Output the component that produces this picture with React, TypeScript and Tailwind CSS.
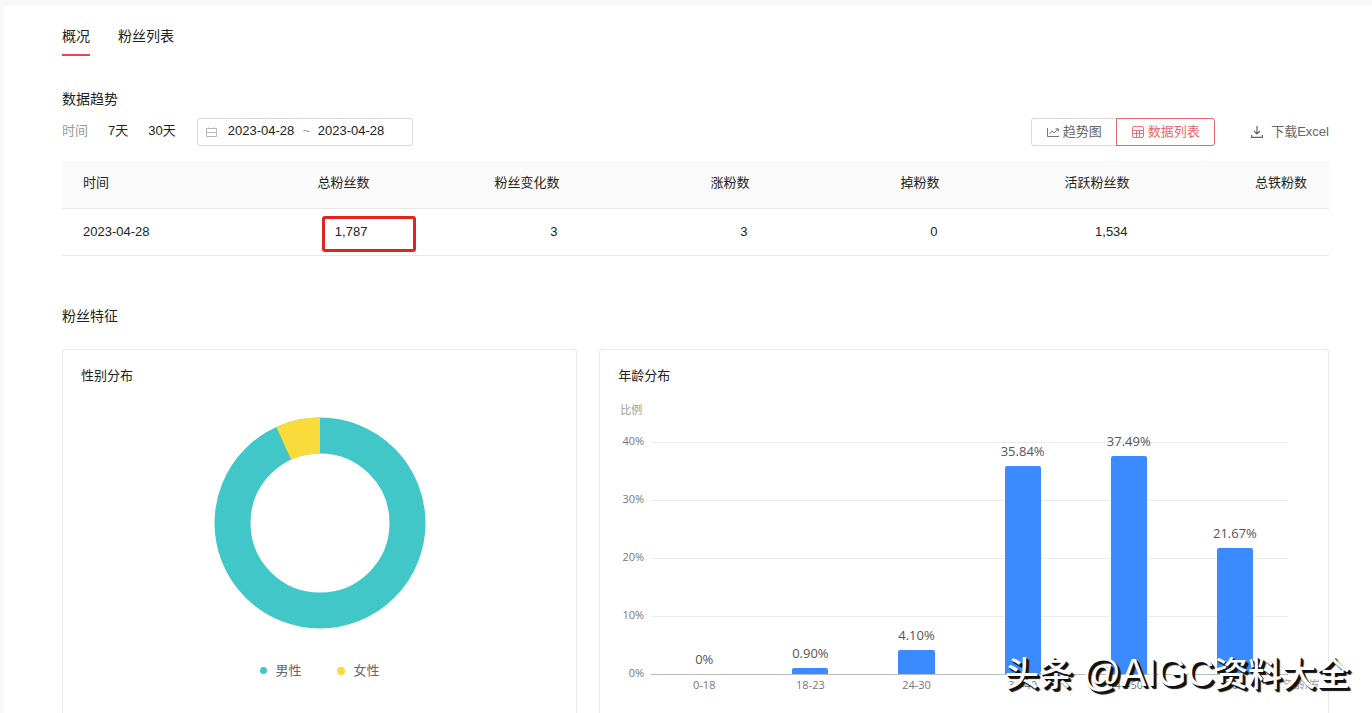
import React, { useState } from "react";

const columns = ["总粉丝数", "粉丝变化数", "涨粉数", "掉粉数", "活跃粉丝数", "总铁粉数"];

const rows = [{ date: "2023-04-28", values: ["1,787", "3", "3", "0", "1,534", ""] }];

const ages = [
  { range: "0-18", percent: 0, label: "0%" },
  { range: "18-23", percent: 0.9, label: "0.90%" },
  { range: "24-30", percent: 4.1, label: "4.10%" },
  { range: "31-40", percent: 35.84, label: "35.84%" },
  { range: "41-50", percent: 37.49, label: "37.49%" },
  { range: "50+", percent: 21.67, label: "21.67%" },
];

const ticks = ["40%", "30%", "20%", "10%"];

const CalendarIcon = () => (
  <svg width="11" height="11" viewBox="0 0 11 11" fill="none" stroke="#b8b8b8" aria-hidden="true">
    <path d="M.5 1.5h10v8H.5zM.5 5.5h10M2.5 .5v1M8.5 .5v1" />
  </svg>
);

const TrendIcon = () => (
  <svg width="12" height="12" viewBox="0 0 12 12" fill="none" stroke="currentColor" strokeWidth=".9" aria-hidden="true">
    <path d="M.5 2v8.5H12M2.5 8l2.5-3 2 2 4-4M8.5 2.8h2.8v2.7" />
  </svg>
);

const TableIcon = () => (
  <svg width="12" height="12" viewBox="0 0 12 12" fill="none" stroke="currentColor" strokeWidth=".9" aria-hidden="true">
    <rect x=".5" y=".5" width="11" height="11" rx="1.5" />
    <path d="M.5 4.5h11M.5 7.5h11M4.5 4.5v7M7.5 4.5v7" />
  </svg>
);

const DownloadIcon = () => (
  <svg width="12" height="12" viewBox="0 0 12 12" fill="none" stroke="currentColor" strokeWidth="1.2" aria-hidden="true">
    <path d="M6 0v8M3 5l3 3 3-3M.6 9v2.4h10.8V9" />
  </svg>
);

const FansTable: React.FC = () => (
  <table className="mt-[15px] w-full table-fixed text-[13px] leading-5">
    <thead>
      <tr className="h-[47px] border-b border-[#e8e8e8] bg-[#fafafa]">
        <th className="w-[11%] pb-0.5 pl-[21px] text-left font-normal">时间</th>
        {columns.map((name, i) => (
          <th key={name} className={`${i === 5 ? "w-[14%]" : "w-[15%]"} pr-[22px] pb-0.5 text-right font-normal`}>
            {name}
          </th>
        ))}
      </tr>
    </thead>
    <tbody>
      {rows.map((row) => (
        <tr key={row.date} className="h-[47px] border-b border-[#e8e8e8]">
          <td className="pl-[21px] whitespace-nowrap">{row.date}</td>
          {row.values.map((value, i) => (
            <td key={columns[i]} className="relative pr-6 text-right">
              {value}
              {i === 0 && (
                <span className="absolute top-[7px] -right-[25px] h-9 w-[94px] rounded-[3px] border-3 border-[#e1251b]" />
              )}
            </td>
          ))}
        </tr>
      ))}
    </tbody>
  </table>
);

const GenderCard: React.FC = () => (
  <section className="h-[380px] rounded-[3px] border border-[#e8e8e8] px-[18px] pt-4">
    <h3 className="text-[13px] leading-5">性别分布</h3>
    <svg className="mx-auto mt-[31px] block" width="212" height="212" viewBox="0 0 212 212" role="img" aria-label="性别分布">
      <circle cx="106" cy="106" r="87.5" fill="none" stroke="#42c7c8" strokeWidth="36" />
      <circle
        cx="106"
        cy="106"
        r="87.5"
        fill="none"
        stroke="#fadb3c"
        strokeWidth="36"
        pathLength="100"
        strokeDasharray="6.8 93.2"
        strokeDashoffset="6.8"
        transform="rotate(-90 106 106)"
      />
    </svg>
    <ul className="mt-8 flex justify-center gap-[35px] text-[13px] leading-5 text-[#666]">
      <li className="flex items-center gap-[9px]">
        <span className="size-[7px] rounded-full bg-[#42c7c8]" />
        男性
      </li>
      <li className="flex items-center gap-[9px]">
        <span className="size-2 rounded-full bg-[#fadb3c]" />
        女性
      </li>
    </ul>
  </section>
);

const AgeCard: React.FC = () => (
  <section className="h-[380px] rounded-[3px] border border-[#e8e8e8] pt-4 pr-10 pl-[18px]">
    <h3 className="text-[13px] leading-5">年龄分布</h3>
    <div className="mt-4 pl-0.5 text-[11px] leading-4 text-[#999]">比例</div>
    <div className="mt-6 flex font-['Open_Sans','Noto_Sans_CJK_SC',sans-serif]">
      <div className="-mt-[9px] w-[26px] text-right text-[11px] leading-4 text-[#777]">
        {ticks.map((tick) => (
          <div key={tick} className="h-[58px]">{tick}</div>
        ))}
        <div>0%</div>
      </div>
      <div className="ml-[7px] min-w-0 flex-1">
        <div className="grid border-b border-[#bbb]">
          <div className="col-start-1 row-start-1">
            {ticks.map((tick) => (
              <div key={tick} className="h-[58px] border-t border-[#ebebeb]" />
            ))}
          </div>
          <div className="col-start-1 row-start-1 grid h-[232px] grid-cols-6">
            {ages.map((age) => (
              <div key={age.range} className="flex h-full flex-col items-center justify-end">
                <span className="-mt-6 mb-[5px] text-[13px] leading-5 text-[#555]">{age.label}</span>
                <div
                  className="w-[34%] shrink-0 rounded-t-[2px] bg-[#3c8aff]"
                  style={{ height: `${(age.percent / 40) * 100}%` }}
                />
              </div>
            ))}
          </div>
        </div>
        <div className="relative mt-0.5 grid grid-cols-6 text-center text-[11px] leading-4 text-[#777]">
          {ages.map((age) => (
            <span key={age.range}>{age.range}</span>
          ))}
          <span className="absolute top-0 -right-8 text-[#999]">年龄/岁</span>
        </div>
      </div>
    </div>
  </section>
);

export default function App() {
  const [view, setView] = useState("list");
  const [start, setStart] = useState("2023-04-28");
  const [end, setEnd] = useState("2023-04-28");

  return (
    <div className="relative h-screen overflow-hidden bg-[#f8f8f9] pt-[6px] pl-1 font-['Liberation_Sans','Noto_Sans_CJK_SC',sans-serif] text-[#222]">
      <main className="min-h-full bg-white pt-5 pr-[43px] pl-[58px]">
        <nav className="flex gap-7 text-sm leading-5">
          <a href="#overview" className="border-b-2 border-[#e0484d] pb-2">概况</a>
          <a href="#fans">粉丝列表</a>
        </nav>

        <h2 className="mt-[33px] text-sm leading-5">数据趋势</h2>
        <div className="mt-[9px] flex items-center text-[13px] leading-5">
          <span className="pb-0.5 text-[#999]">时间</span>
          <button type="button" className="ml-5 pb-0.5">7天</button>
          <button type="button" className="ml-5 pb-0.5">30天</button>
          <div className="ml-[21px] flex h-7 w-[216px] items-center rounded-[3px] border border-[#d9d9d9] pl-2">
            <CalendarIcon />
            <input
              aria-label="开始日期"
              className="ml-[11px] w-[67px] pb-0.5 outline-none"
              value={start}
              onChange={(e) => setStart(e.target.value)}
            />
            <span className="w-[23px] pb-0.5 text-center text-[#999]">~</span>
            <input
              aria-label="结束日期"
              className="w-[67px] pb-0.5 outline-none"
              value={end}
              onChange={(e) => setEnd(e.target.value)}
            />
          </div>
          <div className="ml-auto flex h-7 text-[#666]">
            <button
              type="button"
              onClick={() => setView("trend")}
              className={`flex w-[86px] items-center justify-center gap-1 rounded-l-[3px] border ${view === "trend" ? "z-10 border-[#e8676b] text-[#e8676b]" : "border-[#d9d9d9]"}`}
            >
              <TrendIcon />
              趋势图
            </button>
            <button
              type="button"
              onClick={() => setView("list")}
              className={`-ml-px flex w-[99px] items-center justify-center gap-1 rounded-r-[3px] border ${view === "list" ? "z-10 border-[#e8676b] text-[#e8676b]" : "border-[#d9d9d9]"}`}
            >
              <TableIcon />
              数据列表
            </button>
          </div>
          <button type="button" className="ml-9 flex items-center gap-2 text-[#666]">
            <DownloadIcon />
            下载Excel
          </button>
        </div>

        <FansTable />

        <h2 className="mt-[50px] text-sm leading-5">粉丝特征</h2>
        <div className="mt-[23px] grid grid-cols-[12fr_17fr] gap-[22px]">
          <GenderCard />
          <AgeCard />
        </div>
      </main>

      <div className="absolute right-[22px] bottom-[11px] z-20 text-[34px] leading-[56px] font-medium whitespace-nowrap text-white [text-shadow:1px_1px_0_#111,2px_2px_0_#111,3px_3px_1px_#111]">
        头条 <span className="text-[38px]">@AIGC</span>资料大全
      </div>
    </div>
  );
}
